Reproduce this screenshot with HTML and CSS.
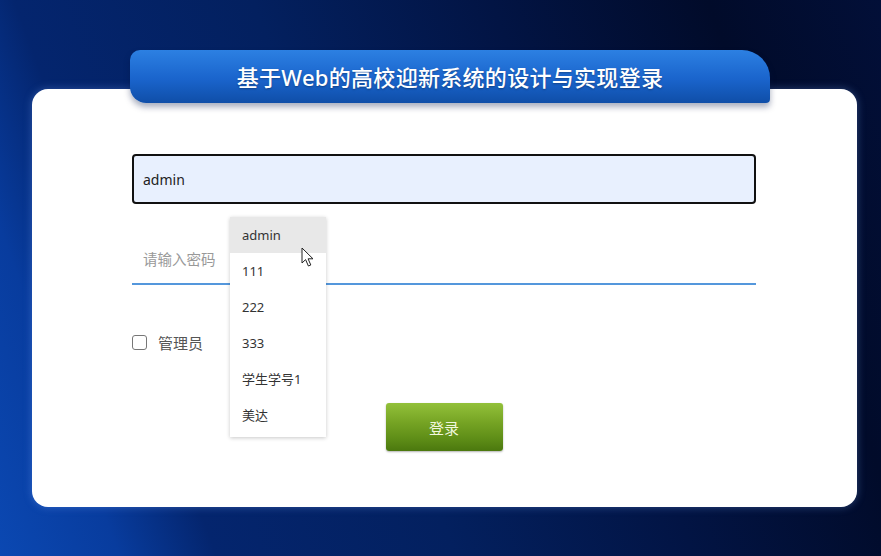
FILE: index.html
```html
<!DOCTYPE html>
<html lang="zh-CN">
<head>
    <meta charset="UTF-8">
    <meta name="viewport" content="width=device-width, initial-scale=1.0">
    <title>登录</title>
    <link rel="stylesheet" href="styles.css">
</head>
<body>
    <div class="login-wrap">
        <div class="title-bar">基于Web的高校迎新系统的设计与实现登录</div>

        <div class="login-card">
            <form class="login-form">
                <input type="text" class="user-input" value="admin">
                <input type="password" class="pass-input" placeholder="请输入密码">

                <label class="role-row">
                    <input type="checkbox" class="role-check">
                    <span>管理员</span>
                </label>

                <button type="button" class="login-button">登录</button>

                <!-- 浏览器自动填充下拉 -->
                <ul class="suggest-list">
                    <li class="active">admin</li>
                    <li>111</li>
                    <li>222</li>
                    <li>333</li>
                    <li>学生学号1</li>
                    <li>美达</li>
                </ul>
                <svg class="mouse-cursor" width="14" height="21" viewBox="0 0 14 21">
                    <path d="M1 1 L1 16 L4.6 12.6 L7.4 19 L9.8 18 L7.1 11.8 L12 11.8 Z" fill="#fff" stroke="#222" stroke-width="1" stroke-linejoin="round"/>
                </svg>
            </form>
        </div>
    </div>
</body>
</html>
```

FILE: styles.css
```css
body {
    margin: 0;
    padding: 0;
    height: 556px;
    overflow: hidden;
    font-family: "Noto Sans", "Noto Sans CJK SC", sans-serif;
    background: linear-gradient(70deg, #0b48b2 0%, #083c9e 11%, #04256e 20%, #03205f 42%, #021444 64%, #010b2a 84%, #020f38 100%);
}

.login-wrap {
    width: 825px;
    margin-left: 32px;
    padding-top: 50px;
}

.title-bar {
    position: relative;
    z-index: 1;
    width: 640px;
    height: 53px;
    margin-left: 98px;
    line-height: 54px;
    text-align: center;
    color: #fff;
    font-size: 22px;
    font-weight: 500;
    letter-spacing: 0.3px;
    border-radius: 10px 28px 4px 16px;
    background: linear-gradient(#2c80e2, #1a64cc 55%, #0f4ea8);
    box-shadow: 0 4px 6px rgba(0, 20, 70, 0.35);
    text-shadow: 0 1px 2px rgba(0, 0, 0, 0.3);
}

.login-card {
    height: 418px;
    margin-top: -14px;
    box-sizing: border-box;
    padding: 65px 101px 0 100px;
    background-color: #fff;
    border-radius: 16px;
    box-shadow: 0 0 8px rgba(120, 170, 255, 0.35);
}

.login-form {
    position: relative;
    display: flex;
    flex-direction: column;
}

.user-input {
    height: 50px;
    box-sizing: border-box;
    padding: 0 9px;
    border: 2px solid #111;
    border-radius: 4px;
    background-color: #e8f0fe;
    font-family: inherit;
    font-size: 14px;
    color: #222;
    outline: none;
}

.pass-input {
    height: 51px;
    margin-top: 30px;
    box-sizing: border-box;
    padding: 0 11px;
    border: none;
    border-bottom: 2px solid #5497dc;
    font-family: inherit;
    font-size: 14.5px;
    outline: none;
}

.pass-input::placeholder {
    color: #999;
}

.role-row {
    display: flex;
    align-items: center;
    height: 20px;
    margin-top: 47px;
    font-size: 15px;
    color: #555;
}

.role-check {
    appearance: none;
    width: 15px;
    height: 15px;
    margin: 0 11px 0 0;
    border: 1px solid #777;
    border-radius: 3px;
    background: #fff;
}

.login-button {
    align-self: center;
    width: 117px;
    height: 48px;
    margin-top: 51px;
    border: none;
    border-radius: 3px;
    color: #f1f7de;
    font-family: inherit;
    font-size: 15px;
    background: linear-gradient(#93c13a, #76a424 40%, #5e8d17 75%, #4b780e);
    box-shadow: 0 1px 2px rgba(0, 0, 0, 0.3);
    cursor: pointer;
}

.suggest-list {
    position: absolute;
    left: 98px;
    top: 63px;
    width: 96px;
    margin: 0;
    padding: 0 0 4px 0;
    list-style: none;
    background: #fff;
    box-shadow: 0 1px 4px rgba(0, 0, 0, 0.22);
}

.suggest-list li {
    height: 36px;
    line-height: 36px;
    padding-left: 12px;
    font-size: 13px;
    color: #333;
}

.suggest-list li.active {
    background-color: #e8e8e8;
}

.mouse-cursor {
    position: absolute;
    left: 169px;
    top: 93px;
}
```
